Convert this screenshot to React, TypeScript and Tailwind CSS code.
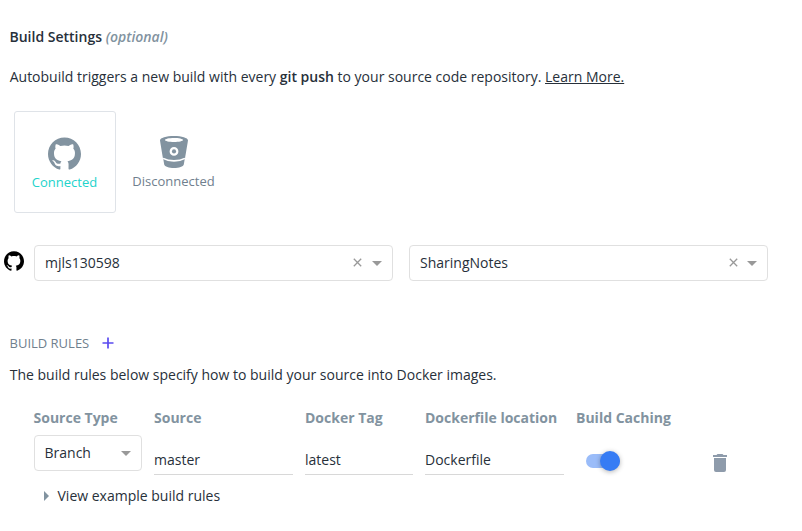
const octocat =
  'M12 .297c-6.63 0-12 5.373-12 12 0 5.303 3.438 9.8 8.205 11.385.6.113.82-.258.82-.577 0-.285-.01-1.04-.015-2.04-3.338.724-4.042-1.61-4.042-1.61C4.422 18.07 3.633 17.7 3.633 17.7c-1.087-.744.084-.729.084-.729 1.205.084 1.838 1.236 1.838 1.236 1.07 1.835 2.809 1.305 3.495.998.108-.776.417-1.305.76-1.605-2.665-.3-5.466-1.332-5.466-5.93 0-1.31.465-2.38 1.235-3.22-.135-.303-.54-1.523.105-3.176 0 0 1.005-.322 3.3 1.23.96-.267 1.98-.399 3-.405 1.02.006 2.04.138 3 .405 2.28-1.552 3.285-1.23 3.285-1.23.645 1.653.24 2.873.12 3.176.765.84 1.23 1.91 1.23 3.22 0 4.61-2.805 5.625-5.475 5.92.42.36.81 1.096.81 2.22 0 1.606-.015 2.896-.015 3.286 0 .315.21.69.825.57C20.565 22.092 24 17.592 24 12.297c0-6.627-5.373-12-12-12';

function Octocat({ className }: { className: string }) {
  return (
    <svg viewBox="0 0 24 24" fill="currentColor" className={className}>
      <path d={octocat} />
    </svg>
  );
}

function Bucket() {
  return (
    <svg viewBox="0 0 28 32" className="h-8 w-7 text-[#8293a0]" fill="currentColor">
      <path
        fillRule="evenodd"
        d="M14 0C6.300 0 0 1.900 0 4.300c0 .7 2.200 13.500 3 18.200C3.400 24.500 8.500 26 14 26s10.600-1.500 11-3.500C25.800 17.800 28 5 28 4.300 28 1.900 21.700 0 14 0Zm0 1.900c5 0 9 .9 9 2s-4 2-9 2-9-.9-9-2 4-2 9-2Zm0 9.100a4.400 4.400 0 1 1 0 8.800 4.400 4.400 0 0 1 0-8.800Z"
      />
      <circle cx="14" cy="15.400" r="2.100" />
      <path d="M3 22.500c3 1.700 7 2.600 11 2.600s8-.9 11-2.600" fill="none" stroke="white" strokeWidth="2" />
      <path d="M4 23.400c3 1.500 6.500 2.300 10 2.300s7-.8 10-2.300c.4-.2.700 0 .6.400L23.800 28.500C23.300 30.600 19 32 14 32s-9.300-1.400-9.800-3.500L3.400 23.800c-.1-.4.200-.6.600-.4Z" />
    </svg>
  );
}

function Caret() {
  return <span className="h-0 w-0 border-x-5 border-t-5 border-x-transparent border-t-[#999]" />;
}

function Select({ value, clearGap }: { value: string; clearGap: string }) {
  return (
    <div className="flex h-9 w-[359px] items-center rounded border border-[#e0e0e0] px-2.5">
      <span className="flex-1">{value}</span>
      <svg viewBox="0 0 9 9" className={`mb-px size-[9px] ${clearGap}`} stroke="#999" strokeWidth="1.3">
        <path d="M.8.8l7.400 7.400M8.200.8L.8 8.200" />
      </svg>
      <Caret />
    </div>
  );
}

function Field({ label, value, width }: { label: string; value: string; width: string }) {
  return (
    <div className={width}>
      <div className="h-[27px] whitespace-nowrap pl-[0.500px] font-bold text-[#8293a0]">{label}</div>
      <div className="mt-[11px] h-[29px] border-b border-[#d8d8d8] pl-[0.500px] pt-1">{value}</div>
    </div>
  );
}

export default function App() {
  return (
    <main className="h-[531px] w-[802px] overflow-hidden bg-white font-['Open_Sans',sans-serif] text-sm leading-5 text-[#27303a]">
      <h1 className="ml-[9.500px] pt-[27px] font-semibold">
        Build Settings <em className="text-[#8293a0]">(optional)</em>
      </h1>
      <p className="ml-[9.700px] mt-5">
        Autobuild triggers a new build with every <b className="font-semibold">git push</b> to your source code
        repository. <a className="underline">Learn More.</a>
      </p>

      <div className="ml-3.5 mt-6 flex text-[13px]">
        <div className="flex h-[102px] w-[102px] flex-col items-center rounded-[3px] border border-[#dfe3e8] pr-px pt-[24.500px] text-[#22d3cb]">
          <Octocat className="size-[33px] text-[#8293a0]" />
          <span className="mt-[2.500px]">Connected</span>
        </div>
        <div className="flex h-[102px] w-[115px] flex-col items-center pt-[25px] text-[#70808e]">
          <Bucket />
          <span className="mt-[3px]">Disconnected</span>
        </div>
      </div>

      <div className="mt-8 flex pl-1">
        <Octocat className="mr-2.5 mt-[6px] size-5 text-black" />
        <Select value="mjls130598" clearGap="mr-2.5" />
        <div className="w-4" />
        <Select value="SharingNotes" clearGap="mr-[9px]" />
      </div>

      <div className="ml-[9.500px] mt-[52px] flex items-center text-[13px] text-[#70808e]">
        BUILD RULES
        <svg viewBox="0 0 12 12" className="ml-[13px] size-3" stroke="#5b4bf0" strokeWidth="1.700">
          <path d="M6 .5v11M.5 6h11" />
        </svg>
      </div>
      <p className="ml-[9.700px] mt-3">The build rules below specify how to build your source into Docker images.</p>

      <div className="ml-[33.500px] mt-[23px] flex h-[67px]">
        <div className="mr-3 w-[108px]">
          <div className="h-[27px] font-bold text-[#8293a0]">Source Type</div>
          <div className="flex h-9 items-center justify-between rounded border border-[#e0e0e0] px-2.5">
            Branch
            <Caret />
          </div>
        </div>
        <Field label="Source" value="master" width="mr-3 w-[139px]" />
        <Field label="Docker Tag" value="latest" width="mr-3 w-[108px]" />
        <Field label="Dockerfile location" value="Dockerfile" width="mr-3 w-[139px]" />
        <div className="w-[137px]">
          <div className="pl-[0.500px] font-bold text-[#8293a0]">Build Caching</div>
          <div className="ml-2.5 mt-[23px] flex h-5 w-[34px] items-center">
            <div className="flex h-3.5 w-full items-center justify-end rounded-full bg-[#9abcf9]">
              <div className="size-5 rounded-full bg-[#367cf4] shadow-[0_1px_5px_rgba(0,0,0,0.3)]" />
            </div>
          </div>
        </div>
        <svg viewBox="0 0 14 18" className="mt-[46px] h-[18px] w-3.5" fill="#8e9bab">
          <path d="M1 4h12v12a2 2 0 0 1-2 2H3a2 2 0 0 1-2-2ZM0 1h3.500l1-1h5l1 1H14v2H0Z" />
        </svg>
      </div>

      <div className="ml-[44px] mt-[11px] flex items-center">
        <span className="mr-[8.500px] h-0 w-0 border-y-5 border-l-5 border-y-transparent border-l-[#8293a0]" />
        View example build rules
      </div>
    </main>
  );
}
